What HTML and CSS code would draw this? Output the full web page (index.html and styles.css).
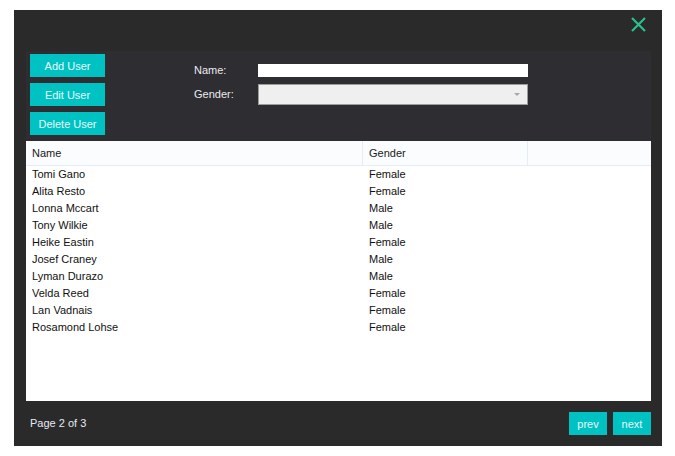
FILE: index.html
```html
<!DOCTYPE html>
<html>
<head>
<meta charset="utf-8">
<link rel="stylesheet" href="styles.css">
</head>
<body>
<div class="window">
  <div class="titlebar">
    <svg class="close" width="15" height="15" viewBox="0 0 15 15"><path d="M1 1 L14 14 M14 1 L1 14" stroke="#2bbf8e" stroke-width="2.2" fill="none"/></svg>
  </div>
  <div class="panel">
    <div class="actions">
      <button class="btn act">Add User</button>
      <button class="btn act">Edit User</button>
      <button class="btn act">Delete User</button>
    </div>
    <div class="form">
      <label class="lbl">Name:</label>
      <div class="input"></div>
      <label class="lbl">Gender:</label>
      <div class="select"><span class="arrow"></span></div>
    </div>
  </div>
  <div class="table">
    <div class="row head">
      <div class="c1">Name</div><div class="c2">Gender</div><div class="c3"></div>
    </div>
    <div class="row"><div class="c1">Tomi Gano</div><div class="c2">Female</div></div>
    <div class="row"><div class="c1">Alita Resto</div><div class="c2">Female</div></div>
    <div class="row"><div class="c1">Lonna Mccart</div><div class="c2">Male</div></div>
    <div class="row"><div class="c1">Tony Wilkie</div><div class="c2">Male</div></div>
    <div class="row"><div class="c1">Heike Eastin</div><div class="c2">Female</div></div>
    <div class="row"><div class="c1">Josef Craney</div><div class="c2">Male</div></div>
    <div class="row"><div class="c1">Lyman Durazo</div><div class="c2">Male</div></div>
    <div class="row"><div class="c1">Velda Reed</div><div class="c2">Female</div></div>
    <div class="row"><div class="c1">Lan Vadnais</div><div class="c2">Female</div></div>
    <div class="row"><div class="c1">Rosamond Lohse</div><div class="c2">Female</div></div>
  </div>
  <div class="footer">
    <span class="page">Page 2 of 3</span>
    <div class="pager">
      <button class="btn pg">prev</button>
      <button class="btn pg">next</button>
    </div>
  </div>
</div>
</body>
</html>
```

FILE: styles.css
```css
* { box-sizing: border-box; }
body {
  margin: 0;
  background: #ffffff;
  font-family: "Liberation Sans", Arial, sans-serif;
  font-size: 11px;
}
.window {
  margin: 10px 0 0 14px;
  width: 648px;
  height: 436px;
  background: #2a2a2a;
  padding: 0 11px 0 12px;
  display: flex;
  flex-direction: column;
}
.titlebar {
  height: 41px;
  display: flex;
  justify-content: flex-end;
  align-items: flex-start;
  padding-top: 7px;
  padding-right: 5px;
}
.close { display: block; }
.panel {
  height: 90px;
  background: #2d2d32;
  display: flex;
  padding: 3px 0 0 4px;
}
.actions {
  display: flex;
  flex-direction: column;
  gap: 6px;
  width: 75px;
}
.btn {
  border: none;
  background: #00c2c2;
  color: #e6fafa;
  font-family: "Liberation Sans", Arial, sans-serif;
  font-size: 11px;
  padding: 0;
  height: 23px;
  cursor: pointer;
}
.act { width: 75px; }
.form {
  margin-left: 89px;
  margin-top: 10px;
  display: grid;
  grid-template-columns: 64px 270px;
  grid-template-rows: 13px 21px;
  row-gap: 7px;
  align-items: center;
}
.lbl {
  color: #ececf0;
  line-height: 13px;
}
.input {
  height: 13px;
  background: #ffffff;
}
.select {
  height: 21px;
  background: #efefef;
  border: 1px solid #9c9c9c;
  position: relative;
}
.arrow {
  position: absolute;
  right: 7px;
  top: 8px;
  width: 0;
  height: 0;
  border-left: 3px solid transparent;
  border-right: 3px solid transparent;
  border-top: 3px solid #a8a8a8;
}
.table {
  height: 260px;
  background: #ffffff;
  color: #111111;
}
.row {
  display: flex;
  height: 17px;
  line-height: 17px;
}
.row .c1 { width: 337px; padding-left: 6px; }
.row .c2 { width: 165px; padding-left: 6px; }
.row .c3 { flex: 1; }
.row.head {
  height: 25px;
  line-height: 24px;
  background: #fbfcfe;
  border-bottom: 1px solid #e4edf7;
  color: #1a1a1a;
}
.row.head .c1, .row.head .c2 { border-right: 1px solid #e4edf7; }
.footer {
  flex: 1;
  display: flex;
  align-items: center;
  justify-content: space-between;
  padding-left: 4px;
}
.page { color: #e6e9f2; margin-top: -1px; }
.pager {
  display: flex;
  gap: 6px;
}
.pg { width: 38px; }
```
